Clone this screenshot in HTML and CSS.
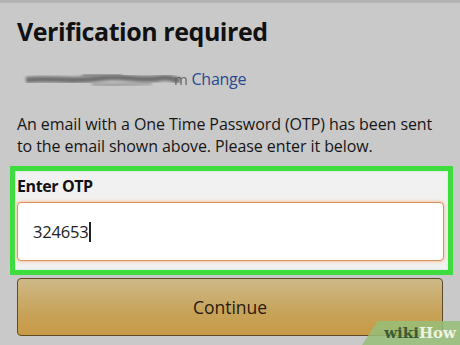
FILE: index.html
```html
<!DOCTYPE html>
<html>
<head>
<meta charset="utf-8">
<link rel="stylesheet" href="styles.css">
</head>
<body>
<div class="page">
  <h1 class="title">Verification required</h1>
  <div class="email-row">
    <span class="blur-wrap">
      <svg class="blur" width="160" height="20" viewBox="0 0 160 20">
        <defs><filter id="b" x="-10%" y="-50%" width="120%" height="200%"><feGaussianBlur stdDeviation="1.5"/></filter></defs>
        <path d="M4 11 C30 8 50 14 80 9 C100 6 120 13 140 9 C148 8 154 11 158 12" stroke="#6e6e6e" stroke-width="6" fill="none" filter="url(#b)"/>
        <path d="M60 7 C80 4 90 8 100 6" stroke="#808080" stroke-width="3" fill="none" filter="url(#b)"/>
        <path d="M70 15 C90 17 110 15 130 14" stroke="#909090" stroke-width="2.5" fill="none" filter="url(#b)"/>
      </svg><span class="m">m</span>
    </span>
    <a class="change">Change</a>
  </div>
  <p class="info">An email with a One Time Password (OTP) has been sent to the email shown above. Please enter it below.</p>
  <div class="highlight">
    <div class="label">Enter OTP</div>
    <div class="input"><span class="value">324653</span><span class="caret"></span></div>
  </div>
  <div class="button">Continue</div>
  <div class="wm"><span class="wiki">wiki</span><span class="how">How</span></div>
</div>
</body>
</html>
```
FILE: styles.css
```css
* { box-sizing: border-box; }
html, body { margin: 0; padding: 0; }
body {
  width: 460px;
  height: 345px;
  overflow: hidden;
  background: #c9c9c9;
  font-family: "Open Sans", "DejaVu Sans", sans-serif;
  color: #111;
}
.page {
  position: relative;
  height: 345px;
  border-top: 3px solid #b4b4b4;
}
.title {
  margin: 0;
  padding: 11px 0 0 17px;
  font-size: 25px;
  font-weight: 700;
  line-height: 34px;
  color: #111;
  letter-spacing: -0.45px;
}
.email-row {
  display: flex;
  align-items: center;
  margin-top: 19px;
  padding-left: 22px;
  height: 24px;
  font-size: 16px;
  letter-spacing: -0.3px;
}
.blur-wrap { display: flex; align-items: center; }
.blur { display: block; margin-right: -8px; }
.m { color: #666; filter: blur(0.6px); font-size: 15px; }
.change { color: #2a4a90; margin-left: 4px; }
.info {
  margin: 22px 0 0 17px;
  width: 423px;
  font-size: 16px;
  letter-spacing: -0.08px;
  line-height: 22px;
  color: #161616;
}
.highlight {
  margin: 9px 7px 0 10px;
  border: 5px solid #3fdc3f;
  background: #f1f1f1;
  padding: 2px 4px 9px 2px;
  box-shadow: inset 0 0 2px #aef0ae;
}
.label {
  font-weight: 700;
  font-size: 16px;
  letter-spacing: -0.4px;
  line-height: 26px;
  margin-top: 0;
  color: #111;
}
.input {
  margin-top: 3px;
  height: 59px;
  background: #fff;
  border: 1px solid #d9925f;
  border-radius: 4px;
  box-shadow: 0 0 3px 1px #f5c9a6;
  display: flex;
  align-items: center;
  padding-left: 15px;
  font-size: 16.5px;
  letter-spacing: -0.2px;
  color: #222;
}
.caret {
  display: inline-block;
  width: 1.5px;
  height: 20px;
  background: #222;
  margin-left: 1px;
}
.button {
  margin: 3px 17px 0 17px;
  height: 58px;
  border: 1px solid #5c4a28;
  border-radius: 4px;
  background: linear-gradient(#cdb987, #c7a35a 60%, #c89a45);
  display: flex;
  align-items: center;
  justify-content: center;
  font-size: 17.5px;
  color: #2a1a0c;
}
.wm {
  position: absolute;
  right: 0;
  bottom: 0;
  width: 98px;
  height: 24px;
  background: rgba(150, 190, 120, 0.85);
  clip-path: polygon(16% 0, 100% 0, 100% 100%, 0 100%);
  display: flex;
  align-items: center;
  justify-content: flex-end;
  padding-right: 4px;
  font-family: "DejaVu Serif", "Liberation Serif", serif;
  font-weight: 700;
  font-size: 15px;
}
.wiki { color: #3f5a32; }
.how { color: #eef3e6; }
```
